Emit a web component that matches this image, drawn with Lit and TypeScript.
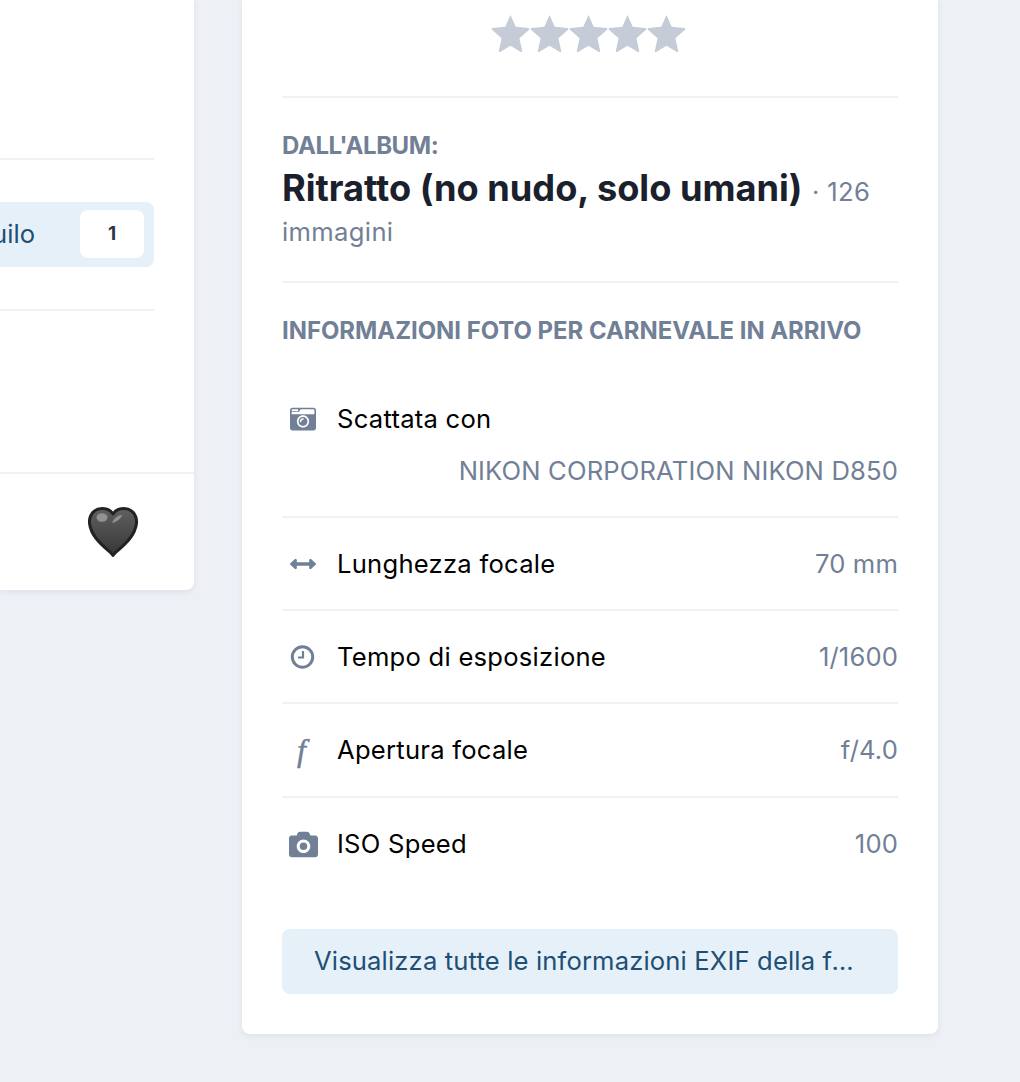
import { LitElement, html, css, svg } from "lit";
import { customElement } from "lit/decorators.js";

const star = svg`<path d="M12 1.2l3.2 7.3 7.9.8c.5.1.7.7.3 1l-5.900 5.300 1.700 7.800c.1.5-.4.9-.9.6L12 20.100 5.700 24c-.4.3-1 -.1-.9-.6l1.700-7.800L.6 10.300c-.4-.3-.2-.9.3-1l7.900-.8z"/>`;

const icons: Record<string, unknown> = {
  retro: html`<svg class="ic nudge" width="26" height="26" viewBox="0 0 512 512"><path d="M48 32C21.5 32 0 53.5 0 80v352c0 26.5 21.5 48 48 48h416c26.5 0 48-21.5 48-48V80c0-26.5-21.5-48-48-48H48zm0 32h106c3.3 0 6 2.7 6 6v20c0 3.3-2.7 6-6 6H38c-3.3 0-6-2.7-6-6V80c0-8.8 7.2-16 16-16zm426 96H38c-3.3 0-6-2.7-6-6v-36c0-3.3 2.7-6 6-6h138l30.2-45.3c1.1-1.7 3-2.7 5-2.7H464c8.8 0 16 7.2 16 16v74c0 3.3-2.7 6-6 6zM256 424c-66.2 0-120-53.800-120-120s53.800-120 120-120 120 53.800 120 120-53.800 120-120 120zm0-208c-48.500 0-88 39.500-88 88s39.500 88 88 88 88-39.500 88-88-39.500-88-88-88zm-48 104c-8.800 0-16-7.200-16-16 0-35.300 28.700-64 64-64 8.800 0 16 7.200 16 16s-7.200 16-16 16c-17.600 0-32 14.400-32 32 0 8.800-7.200 16-16 16z"/></svg>`,
  arrows: html`<svg class="ic nudge" width="26" height="10" viewBox="0 148 512 216" preserveAspectRatio="none"><path d="M377.941 169.941V216H134.059v-46.059c0-21.382-25.851-32.09-40.971-16.971L7.029 239.029c-9.373 9.373-9.373 24.569 0 33.941l86.059 86.059c15.119 15.119 40.971 4.411 40.971-16.971V296h243.882v46.059c0 21.382 25.851 32.09 40.971 16.971l86.059-86.059c9.373-9.373 9.373-24.569 0-33.941l-86.059-86.059c-15.119-15.12-40.971-4.412-40.971 16.97z"/></svg>`,
  clock: html`<svg class="ic" width="28" height="28" viewBox="0 0 28 28"><circle cx="13.500" cy="14" r="10.200" fill="none" stroke="#718096" stroke-width="3"/><path d="M14 8v6.500H9" fill="none" stroke="#718096" stroke-width="2.200"/></svg>`,
  camera: html`<svg class="ic" width="29" height="29" viewBox="0 0 512 512"><path d="M512 144v288c0 26.500-21.500 48-48 48H48c-26.500 0-48-21.500-48-48V144c0-26.500 21.500-48 48-48h88l12.300-32.900c7-18.700 24.900-31.100 44.900-31.100h125.500c20 0 37.900 12.400 44.900 31.100L376 96h88c26.500 0 48 21.500 48 48zM376 288c0-66.200-53.800-120-120-120s-120 53.800-120 120 53.800 120 120 120 120-53.800 120-120z"/><circle cx="256" cy="288" r="66"/></svg>`,
  f: html`<span class="fi">f</span>`,
};

@customElement("app-root")
export class AppRoot extends LitElement {
  static styles = css`
    :host { display: flex; width: 1020px; height: 1082px; background: #edf1f6; overflow: hidden;
      font-family: Inter, "Noto Sans", sans-serif; align-items: flex-start; }
    .left { width: 194px; height: 590px; box-sizing: border-box; background: #fff; border-radius: 0 0 8px 0;
      box-shadow: 0 2px 6px rgba(45,55,72,.08); overflow: hidden; display: flex; flex-direction: column; flex: none; }
    .lhr { height: 2px; background: #edf2f7; width: 154px; flex: none; }
    .pill { width: 154px; height: 65px; box-sizing: border-box; background: #e6f0f8; border-radius: 0 8px 8px 0;
      display: flex; align-items: flex-start; justify-content: flex-end; padding: 8px 10px 0 0; margin: 42px 0;
      color: #1d4f76; font-size: 25.6px; line-height: 48px; white-space: nowrap; gap: 45px; flex: none; }
    .badge { width: 64px; height: 48px; background: #fff; border-radius: 8px; text-align: center;
      color: #2d3748; font-size: 19px; font-weight: 700; flex: none; }
    .foot { margin-top: 161px; border-top: 2px solid #edf2f7; height: 115px; display: flex; align-items: center;
      justify-content: flex-end; padding-right: 55px; }
    .right { margin-left: 48px; width: 696px; height: 1034px; box-sizing: border-box; background: #fff; border-radius: 0 0 8px 8px;
      box-shadow: 0 2px 6px rgba(45,55,72,.08); padding: 13px 40px 0; flex: none; display: flex; flex-direction: column; }
    .stars { display: flex; justify-content: center; height: 40px; margin: 0 4px 43px 0; }
    .stars svg { width: 39px; height: 39px; fill: #c5ccd8; display: block; }
    .hr { height: 2px; background: #edf2f7; flex: none; }
    .from { margin-top: 35px; font-size: 24px; line-height: 26px; font-weight: 700; color: #718096; letter-spacing: -0.4px; }
    .album { margin-top: 11px; font-size: 25.6px; letter-spacing: .35px; line-height: 40px; color: #718096; margin-bottom: 29px; }
    .album b { font-size: 36.2px; line-height: 1; font-weight: 700; color: #1a202c; letter-spacing: 0; margin-right: 2px; }
    .sect { margin-top: 35px; font-size: 23.9px; line-height: 26px; font-weight: 700; color: #718096; margin-bottom: 59px; }
    .row { display: flex; flex-wrap: wrap; align-items: center; font-size: 25.6px; letter-spacing: .25px; line-height: 32px; padding: 30px 0 29px; border-bottom: 2px solid #edf2f7; color: #000; }
    .row.first { padding-top: 0; padding-bottom: 29px; row-gap: 20px; }
    .row.fourth { padding-bottom: 30px; }
    .row.last { border-bottom: 0; }
    .icw { width: 55px; height: 32px; display: flex; align-items: center; padding-left: 7px; box-sizing: border-box; }
    .ic { display: block; fill: #718096; }
    .nudge { margin-left: 1px; }
    .fi { font-family: "Liberation Serif", serif; font-style: italic; font-size: 32px; line-height: 32px; color: #718096; padding-left: 8px; -webkit-text-stroke: .5px #718096; }
    .val { margin-left: auto; color: #718096; letter-spacing: .15px; }
    .btn { margin-top: 40px; height: 65px; border-radius: 8px; background: #e6f0f8; color: #1d4f76; font-size: 25.6px; letter-spacing: .15px;
      line-height: 63px; padding: 0 32px; white-space: nowrap; overflow: hidden; text-overflow: ellipsis; flex: none; box-sizing: border-box; }
  `;

  row(icon: string, label: string, val: string, cls = "") {
    return html`<div class="row ${cls}"><span class="icw">${icons[icon]}</span><span>${label}</span><span class="val">${val}</span></div>`;
  }

  render() {
    return html`
      <div class="left">
        <div class="lhr" style="margin-top:158px"></div>
        <div class="pill"><span>Tranquilo</span><span class="badge">1</span></div>
        <div class="lhr"></div>
        <div class="foot">
          <svg width="52" height="52" viewBox="0 0 52 52">
            <defs>
              <linearGradient id="hg" x1="0" y1="0" x2="0" y2="1"><stop offset="0" stop-color="#606060"/><stop offset="1" stop-color="#363636"/></linearGradient>
            </defs>
            <path d="M26 49.500C24 45 4 34 2.500 17 2 8 8 2.500 15 2.500c5 0 9 2 11 5.500 2-3.500 6-5.500 11-5.500 7 0 13 5.500 12.500 14.500C48 34 28 45 26 49.500z" fill="url(#hg)" stroke="#222" stroke-width="3" stroke-linejoin="round"/>
            <ellipse cx="15" cy="11.500" rx="5.500" ry="4.200" fill="#929292"/>
            <path d="M25 17c2-5 6-8 10-8-1 4-6 7-10 8z" fill="#929292"/>
          </svg>
        </div>
      </div>
      <div class="right">
        <div class="stars">${[0,1,2,3,4].map(() => html`<svg viewBox="0 0 24 24">${star}</svg>`)}</div>
        <div class="hr"></div>
        <div class="from">DALL'ALBUM:</div>
        <div class="album"><b>Ritratto (no nudo, solo umani)</b> · 126 immagini</div>
        <div class="hr"></div>
        <div class="sect">INFORMAZIONI FOTO PER CARNEVALE IN ARRIVO</div>
        ${this.row("retro", "Scattata con", "NIKON CORPORATION NIKON D850", "first")}
        ${this.row("arrows", "Lunghezza focale", "70 mm")}
        ${this.row("clock", "Tempo di esposizione", "1/1600")}
        ${this.row("f", "Apertura focale", "f/4.0", "fourth")}
        ${this.row("camera", "ISO Speed", "100", "last")}
        <div class="btn">Visualizza tutte le informazioni EXIF della foto</div>
      </div>
    `;
  }
}
